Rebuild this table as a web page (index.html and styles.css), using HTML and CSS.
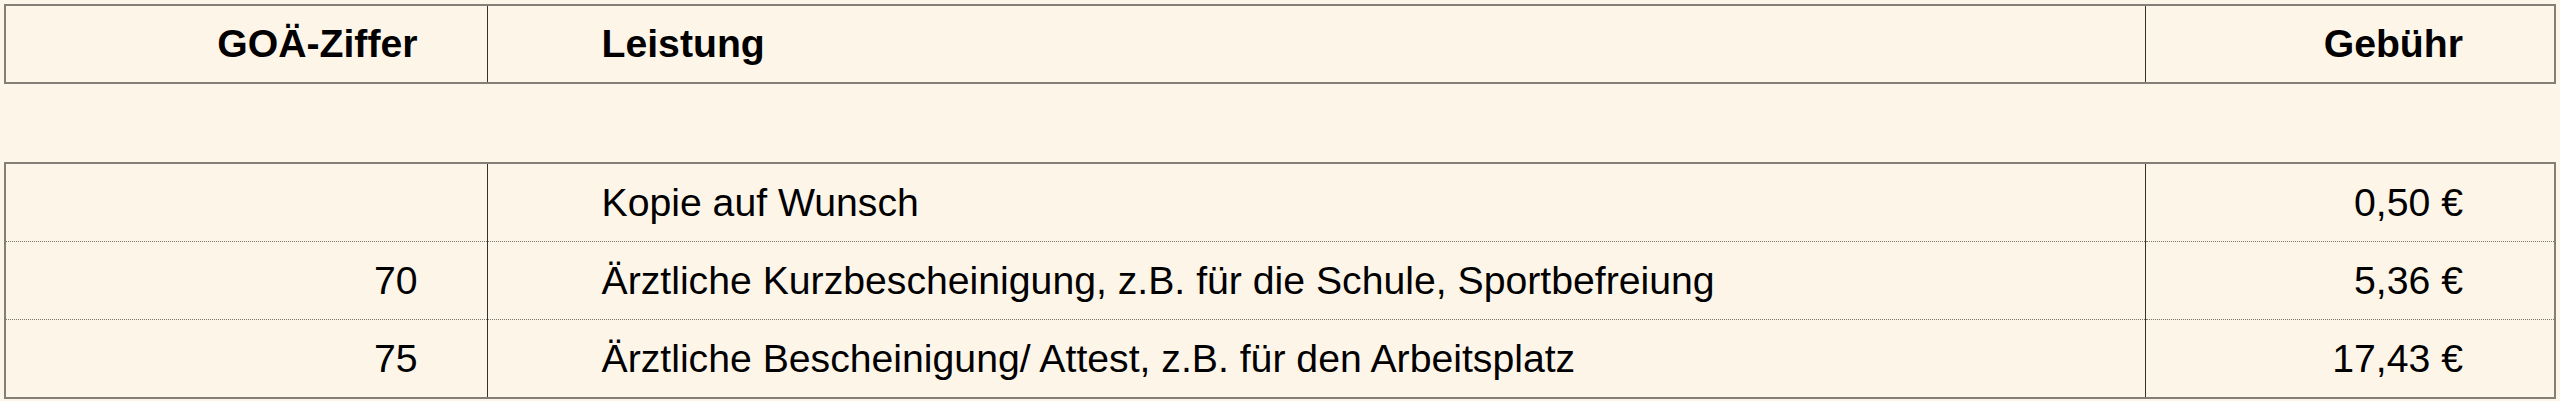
FILE: index.html
```html
<!DOCTYPE html>
<html lang="de">
<head>
<meta charset="utf-8">
<title>GOÄ Gebühren</title>
<link rel="stylesheet" href="styles.css">
</head>
<body>
<div class="page">
  <table class="fees head">
    <colgroup><col class="c1"><col class="c2"><col class="c3"></colgroup>
    <tr>
      <th class="num">GOÄ-Ziffer</th>
      <th class="txt">Leistung</th>
      <th class="fee">Gebühr</th>
    </tr>
  </table>
  <table class="fees body">
    <colgroup><col class="c1"><col class="c2"><col class="c3"></colgroup>
    <tr>
      <td class="num"></td>
      <td class="txt">Kopie auf Wunsch</td>
      <td class="fee">0,50 €</td>
    </tr>
    <tr>
      <td class="num">70</td>
      <td class="txt">Ärztliche Kurzbescheinigung, z.B. für die Schule, Sportbefreiung</td>
      <td class="fee">5,36 €</td>
    </tr>
    <tr>
      <td class="num">75</td>
      <td class="txt">Ärztliche Bescheinigung/ Attest, z.B. für den Arbeitsplatz</td>
      <td class="fee">17,43 €</td>
    </tr>
  </table>
</div>
</body>
</html>
```
FILE: styles.css
```css
html, body {
  margin: 0;
  padding: 0;
  background: #fef5e9;
}
body {
  font-family: "Liberation Sans", Arial, sans-serif;
  color: #000;
}
.page {
  padding: 4px 0 0 4px;
  width: 2550px;
  display: flex;
  flex-direction: column;
  gap: 78px;
}
.fees {
  width: 2550px;
  border-collapse: collapse;
  table-layout: fixed;
  border: 2px solid #847e76;
  background: #fef5e9;
}
.c1 { width: 482px; }
.c2 { width: 1658px; }
.c3 { width: 410px; }
.fees th, .fees td {
  padding: 0;
  font-size: 39.2px;
  line-height: 44px;
  white-space: nowrap;
}
.fees th {
  height: 76px;
  font-weight: bold;
}
.fees td {
  height: 77px;
  font-weight: normal;
}
.fees tr + tr td {
  border-top: 1px dotted #77726c;
}
.fees .num {
  text-align: right;
  padding-right: 69px;
  border-right: 1px solid #35312d;
}
.fees .txt {
  text-align: left;
  padding-left: 114px;
  border-right: 1px solid #35312d;
}
.fees .fee {
  text-align: right;
  padding-right: 91px;
}
```
